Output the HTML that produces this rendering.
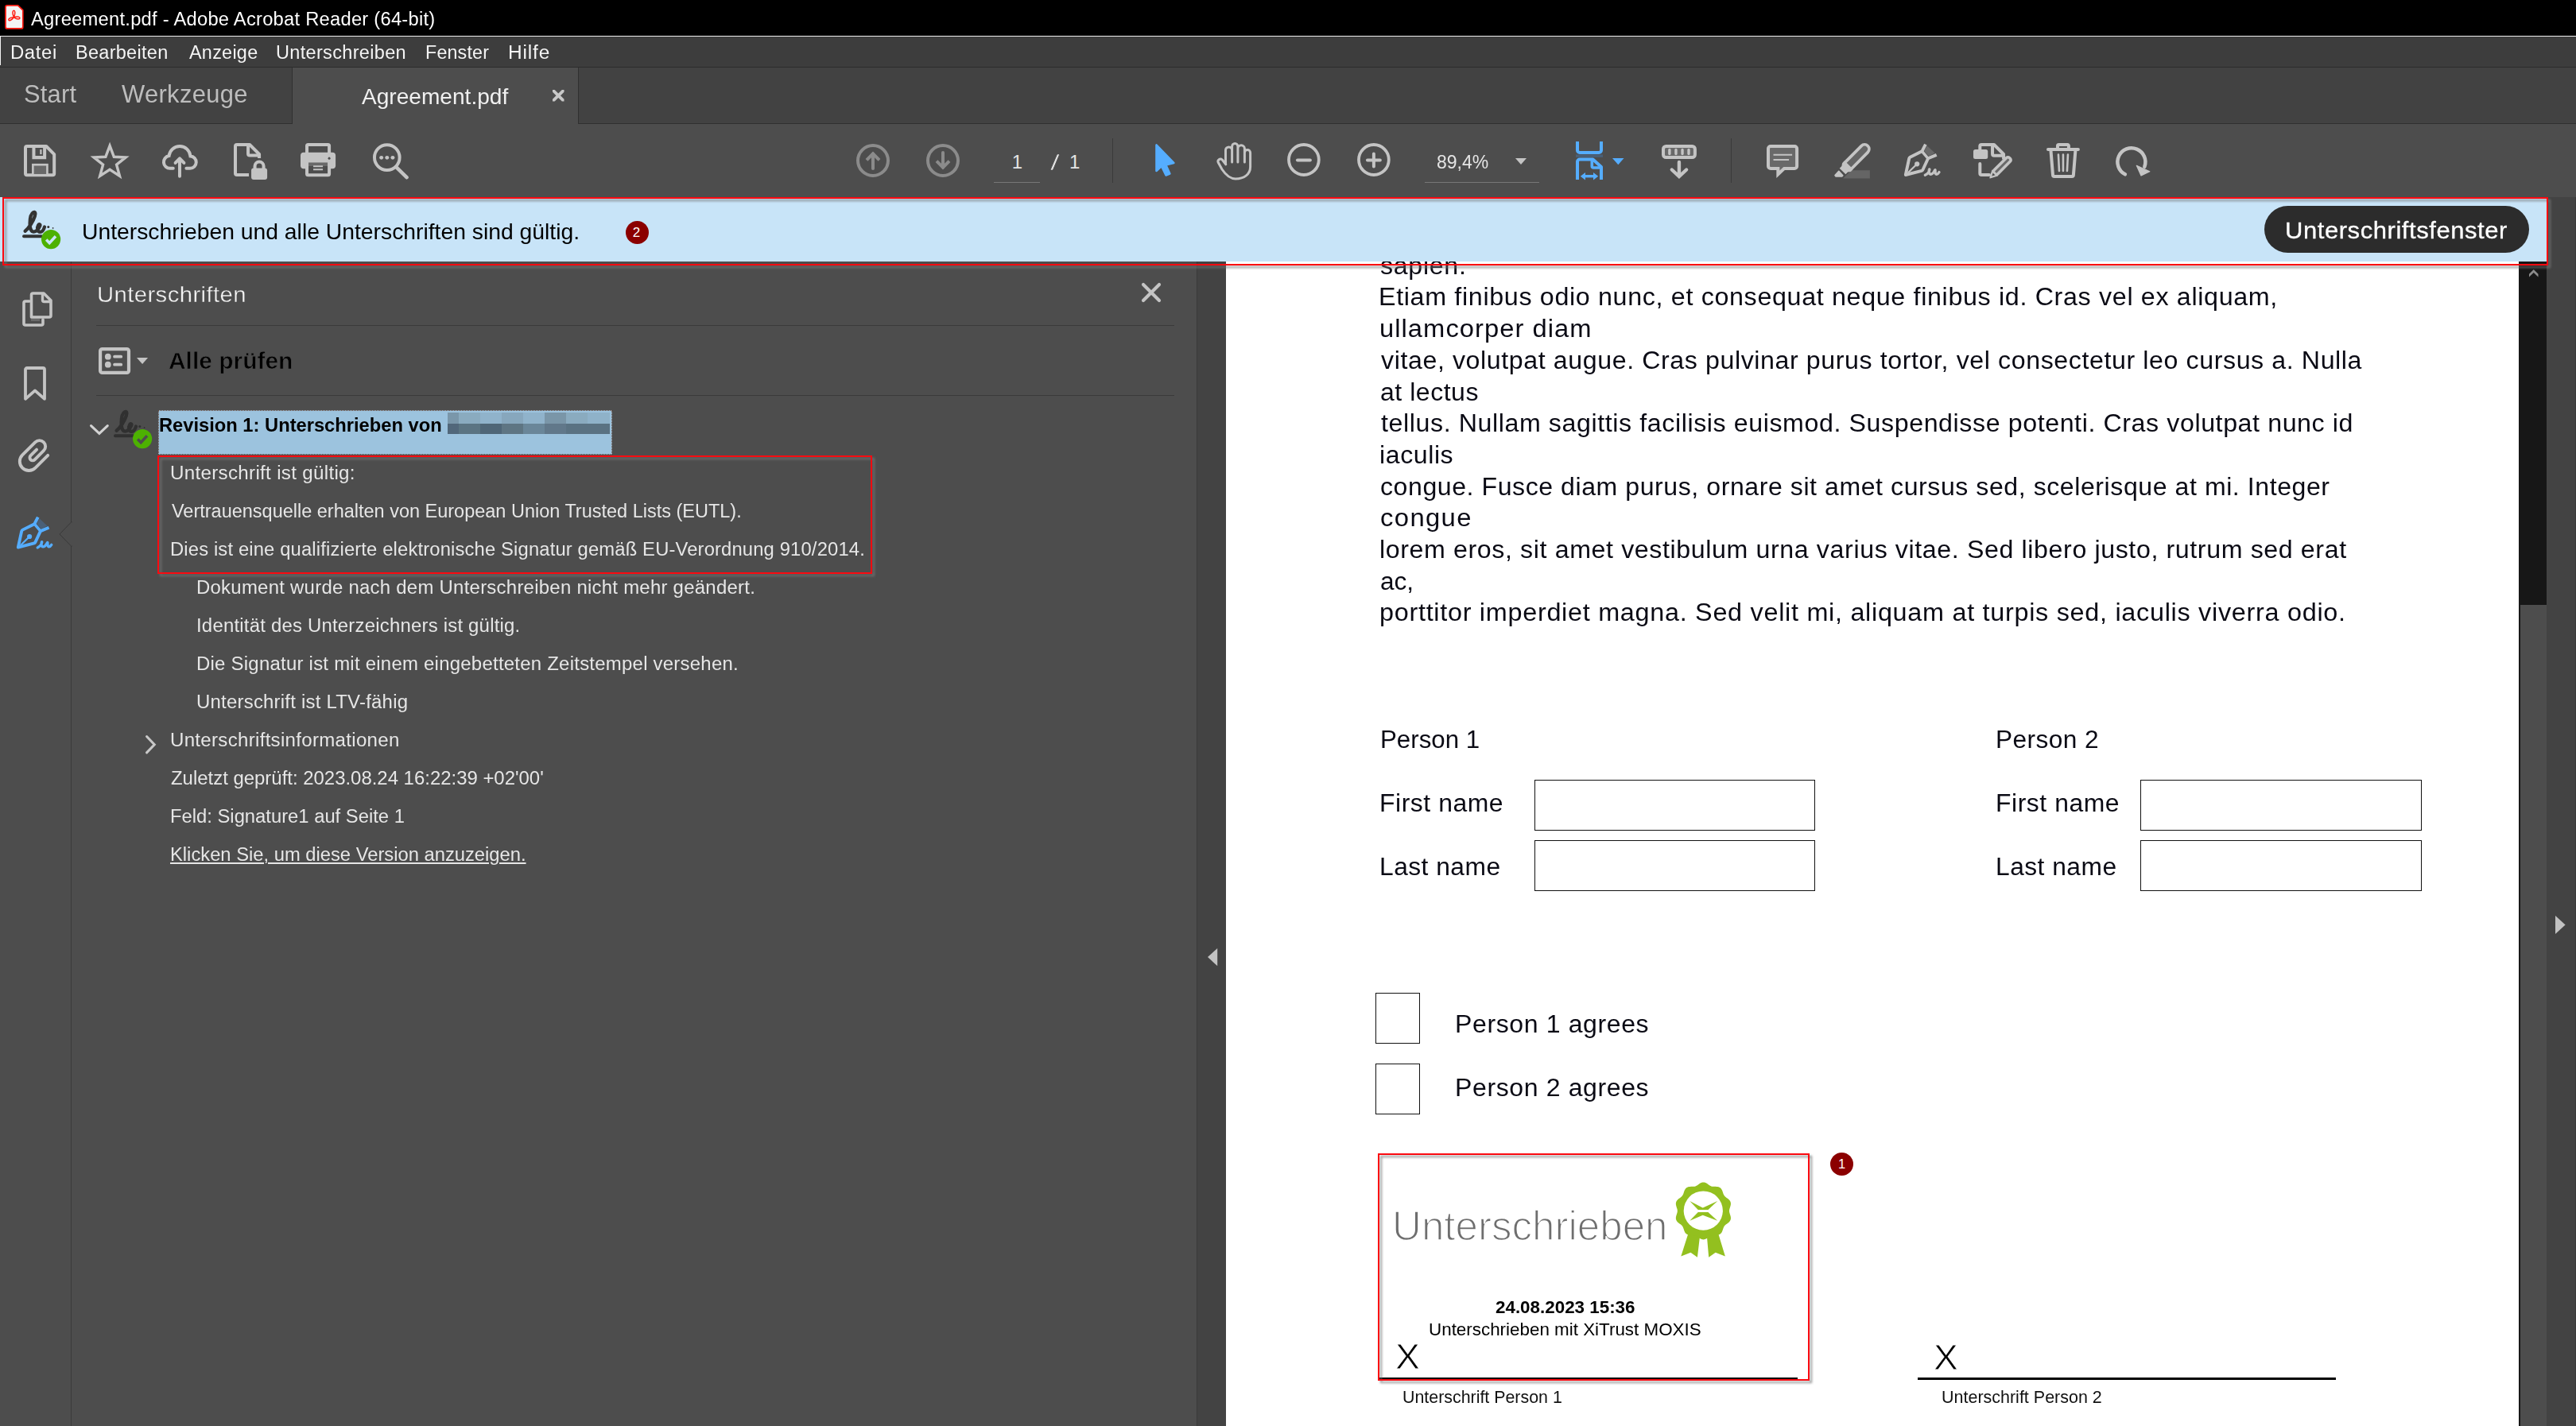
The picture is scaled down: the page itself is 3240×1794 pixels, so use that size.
<!DOCTYPE html>
<html lang="de">
<head>
<meta charset="utf-8">
<title>Agreement.pdf - Adobe Acrobat Reader (64-bit)</title>
<style>
*{box-sizing:border-box;margin:0;padding:0}
html,body{background:#4d4d4d;}
.app{position:relative;width:3240px;height:1794px;overflow:hidden;background:#4d4d4d;font-family:"Liberation Sans",sans-serif;}
.rg{position:absolute;overflow:hidden}
.t{position:absolute;white-space:nowrap;transform-origin:0 50%;display:block;font-weight:400;font-style:normal;text-decoration:none;cursor:default}
.b{position:absolute}
.ic{position:absolute;overflow:visible;fill:none;stroke:currentColor;color:#c4c4c4}

</style>
</head>
<body>
<div class="app">
<header class="rg titlebar" style="left:0px;top:0px;width:3240px;height:46.2px;background:#000;border-bottom:1.5px solid #f0f0f0;">
<svg class="ic" aria-hidden="true" style="left:6.1px;top:6.0px;width:23.7px;height:30.8px;" viewBox="0 0 23.7 30.8" preserveAspectRatio="none">
<path d="M3 0.900H16.600L22.800 6.800V27.900a2 2 0 0 1-2 2H3a2 2 0 0 1-2-2V2.900a2 2 0 0 1 2-2Z" fill="#f4f4f4" stroke="#ff1c12" stroke-width="1.700" stroke-linejoin="round"/>
<path d="M11.40 15.80C6.34 4.46 16.46 4.46 11.40 15.80M11.40 15.80C4.88 24.35 0.66 16.01 11.40 15.80M11.40 15.80C22.14 12.26 20.84 22.01 11.40 15.80" stroke="#ff1c12" stroke-width="1.500" stroke-linejoin="round"/>
</svg>
<h1 class="t" style="left:39.3px;top:12.90px;font-size:23.3px;line-height:23.3px;color:#fff;letter-spacing:0.245px;transform:scaleX(1.0185);">Agreement.pdf - Adobe Acrobat Reader (64-bit)</h1>
</header>
<nav class="rg menubar" role="menubar" style="left:0px;top:46.2px;width:3240px;height:38.8px;background:#3d3d3d;border-bottom:1.3px solid #2c2c2c;">
<div class="b" style="left:0.0px;top:-0.2px;width:1.3px;height:36.0px;background:#f2f2f2;"></div>
<span role="menuitem" class="t" style="left:12.9px;top:9.31px;font-size:23px;line-height:23px;color:#f4f4f4;letter-spacing:0.582px;transform:scaleX(1.0396);">Datei</span>
<span role="menuitem" class="t" style="left:95.4px;top:9.31px;font-size:23px;line-height:23px;color:#f4f4f4;letter-spacing:0.293px;transform:scaleX(1.0204);">Bearbeiten</span>
<span role="menuitem" class="t" style="left:237.6px;top:9.31px;font-size:23px;line-height:23px;color:#f4f4f4;letter-spacing:0.271px;transform:scaleX(1.0165);">Anzeige</span>
<span role="menuitem" class="t" style="left:347.4px;top:9.31px;font-size:23px;line-height:23px;color:#f4f4f4;letter-spacing:0.315px;transform:scaleX(1.0224);">Unterschreiben</span>
<span role="menuitem" class="t" style="left:535.0px;top:9.31px;font-size:23px;line-height:23px;color:#f4f4f4;letter-spacing:0.172px;transform:scaleX(1.0112);">Fenster</span>
<span role="menuitem" class="t" style="left:639.2px;top:9.31px;font-size:23px;line-height:23px;color:#f4f4f4;letter-spacing:0.788px;transform:scaleX(1.0638);">Hilfe</span>
</nav>
<div class="rg tabbar" role="tablist" style="left:0px;top:85px;width:3240px;height:71px;background:#424242;border-bottom:1.3px solid #303030;overflow:visible;">
<span role="tab" class="t" style="left:29.9px;top:17.81px;font-size:30.5px;line-height:30.5px;color:#bdbdbd;letter-spacing:0.217px;transform:scaleX(1.0116);">Start</span>
<span role="tab" class="t" style="left:152.6px;top:17.81px;font-size:30.5px;line-height:30.5px;color:#bdbdbd;letter-spacing:0.319px;transform:scaleX(1.0139);">Werkzeuge</span>
<div class="b" style="left:367.0px;top:0.0px;width:361.0px;height:71.5px;background:#4d4d4d;border-left:1.3px solid #303030;border-right:1.3px solid #303030;"></div>
<span role="tab" aria-selected="true" class="t" style="left:455.4px;top:22.91px;font-size:28px;line-height:28px;color:#f0f0f0;transform:scaleX(1.0033);">Agreement.pdf</span>
<svg class="ic" role="img" aria-label="Tab schließen" style="left:694.7px;top:27.8px;width:14.5px;height:14.4px;color:#c8c8c8;" viewBox="0 0 14.5 14.4" preserveAspectRatio="none"><path d="M0 0H2.700L14.500 11.700V14.400H11.800L0 2.700Z" fill="currentColor" stroke="none"/><path d="M14.500 0H11.800L0 11.700V14.400H2.700L14.500 2.700Z" fill="currentColor" stroke="none"/></svg>
</div>
<div class="rg toolbar" role="toolbar" style="left:0px;top:156px;width:3240px;height:92px;background:#4d4d4d;">
<svg class="ic" role="img" aria-label="Speichern" style="left:29.8px;top:26.0px;width:40.2px;height:40.3px;color:#c4c4c4;" viewBox="0 0 40 40" preserveAspectRatio="none">
<path d="M4 2H28L38 12V36a2 2 0 0 1-2 2H4a2 2 0 0 1-2-2V4a2 2 0 0 1 2-2Z" stroke-width="4" stroke-linejoin="round"/>
<path d="M12.4 2V16H26V2" stroke-width="4"/>
<rect x="20.2" y="6" width="2.2" height="6" fill="currentColor" stroke="none"/>
<rect x="11.3" y="25" width="18" height="13" fill="#696969" stroke-width="2.6"/>
</svg>
<svg class="ic" role="img" aria-label="Favorit" style="left:113.9px;top:22.9px;width:48.2px;height:46.1px;color:#c4c4c4;" viewBox="0 0 48 46" preserveAspectRatio="none"><polygon points="24.00,4.40 29.23,18.20 43.97,18.91 32.46,28.15 36.34,42.39 24.00,34.30 11.66,42.39 15.54,28.15 4.03,18.91 18.77,18.20" stroke-width="3.4" stroke-linejoin="miter"/></svg>
<svg class="ic" role="img" aria-label="Hochladen" style="left:203.9px;top:25.9px;width:44.4px;height:42.1px;color:#c4c4c4;" viewBox="0 0 44.4 42.1" preserveAspectRatio="none">
<path d="M13.800 29.800H9.900A7.900 7.900 0 0 1 8.570 14.100A13.500 13.500 0 0 1 35.450 14.410A7.700 7.700 0 0 1 35.100 29.800H30.400" stroke-width="4" stroke-linecap="round"/>
<path d="M22 39.800V17.800M16.600 23L22 17.300L27.400 23" stroke-width="4" stroke-linecap="round" stroke-linejoin="round"/>
</svg>
<svg class="ic" role="img" aria-label="Schützen" style="left:293.9px;top:24.0px;width:42.1px;height:46.0px;color:#c4c4c4;" viewBox="0 0 42 46" preserveAspectRatio="none">
<path d="M19 40H4a2 2 0 0 1-2-2V4a2 2 0 0 1 2-2H20L32 14V19" stroke-width="4" stroke-linejoin="round"/>
<path d="M18 2V13.5a2 2 0 0 0 2 2H32" stroke-width="4"/>
<rect x="22" y="31.5" width="20" height="14.5" rx="3" fill="currentColor" stroke="none"/>
<path d="M26.5 33V29a5.5 5.5 0 0 1 11 0V33" stroke-width="4"/>
</svg>
<svg class="ic" role="img" aria-label="Drucken" style="left:377.9px;top:24.0px;width:44.1px;height:42.3px;color:#c4c4c4;" viewBox="0 0 44 42" preserveAspectRatio="none">
<rect x="8" y="2" width="28" height="12" rx="1.5" stroke-width="4"/>
<rect x="0" y="11.7" width="44" height="20.3" rx="4" fill="currentColor" stroke="none"/>
<rect x="8" y="26" width="28" height="14" rx="1.5" fill="#4d4d4d" stroke-width="4"/>
<rect x="10" y="24.3" width="24" height="3.6" fill="#696969" stroke="none"/>
<path d="M16 29H28M16 33H28" stroke-width="2"/>
<circle cx="36" cy="19" r="1.5" fill="#4d4d4d" stroke="none"/>
</svg>
<svg class="ic" role="img" aria-label="Suchen" style="left:468.5px;top:24.0px;width:44.5px;height:45.7px;color:#c4c4c4;" viewBox="0 0 45 46" preserveAspectRatio="none">
<circle cx="18" cy="18.2" r="16" stroke-width="4"/>
<path d="M29.6 30.4L43 43.5" stroke-width="4.6" stroke-linecap="round"/>
<circle cx="10.8" cy="18.5" r="2.5" fill="currentColor" stroke="none"/>
<circle cx="18" cy="18.5" r="2.5" fill="currentColor" stroke="none"/>
<circle cx="25.2" cy="18.5" r="2.5" fill="currentColor" stroke="none"/>
</svg>
<svg class="ic" role="img" aria-label="Vorherige Seite" style="left:1077.1px;top:25.0px;width:42.0px;height:42.0px;color:#8b8b8b;" viewBox="0 0 42 42" preserveAspectRatio="none">
<circle cx="21" cy="21" r="19" stroke-width="4"/>
<path d="M21 31V12.500" stroke-width="4" stroke-linecap="round"/>
<path d="M13 20.300L21 12.300L29 20.300" stroke-width="4" stroke-linecap="butt" stroke-linejoin="miter"/>
</svg>
<svg class="ic" role="img" aria-label="Nächste Seite" style="left:1165.2px;top:25.0px;width:42.0px;height:42.0px;color:#8b8b8b;" viewBox="0 0 42 42" preserveAspectRatio="none">
<circle cx="21" cy="21" r="19" stroke-width="4"/>
<path d="M21 11V29.500" stroke-width="4" stroke-linecap="round"/>
<path d="M13 21.700L21 29.700L29 21.700" stroke-width="4" stroke-linecap="butt" stroke-linejoin="miter"/>
</svg>
<span class="t" style="left:1272.8px;top:36.41px;font-size:24px;line-height:24px;color:#e4e4e4;">1</span>
<div class="b" style="left:1250.0px;top:73.0px;width:58.0px;height:1.0px;background:#777;"></div>
<span class="t" style="left:1321.0px;top:35.52px;font-size:27px;line-height:27px;color:#e4e4e4;-webkit-text-stroke:0.6px #4d4d4d;transform:scaleX(1.5714);">/</span>
<span class="t" style="left:1345.0px;top:36.41px;font-size:24px;line-height:24px;color:#e4e4e4;">1</span>
<div class="b" style="left:1399.0px;top:18.0px;width:1.0px;height:56.0px;background:#3a3a3a;"></div>
<svg class="ic" role="img" aria-label="Auswahlwerkzeug" style="left:1453.4px;top:24.5px;width:24.8px;height:41.0px;color:#55adff;" viewBox="0 0 25 41" preserveAspectRatio="none">
<path d="M1.5 1.5V34L8 28L13.6 39.5L18.5 37.5L13.5 26.5L23.5 24Z" fill="currentColor" stroke-width="2.6" stroke-linejoin="round"/>
</svg>
<svg class="ic" role="img" aria-label="Handwerkzeug" style="left:1529.7px;top:22.8px;width:44.1px;height:47.4px;color:#c4c4c4;" viewBox="0 0 44.1 47.4" preserveAspectRatio="none">
<path d="M11.5 27.5V10a4.05 4.05 0 0 1 8.1 0V25M19.6 10V5.2a3.65 3.65 0 0 1 7.3 0V25M26.9 8a4.25 4.25 0 0 1 8.5 0V25M35.4 13.2a3.6 3.6 0 0 1 7.2 0V31C42.6 40 35 45.9 24 45.9C16 45.9 11 40 7 34L2.3 25.5c-1.5-3 2.2-6 5-3.500L11.800 27.800" stroke-width="3" stroke-linecap="round" stroke-linejoin="round"/>
</svg>
<svg class="ic" role="img" aria-label="Verkleinern" style="left:1619.2px;top:24.0px;width:41.8px;height:42.0px;color:#c4c4c4;" viewBox="0 0 42 42" preserveAspectRatio="none">
<circle cx="21" cy="21" r="19" stroke-width="3.8"/>
<path d="M13 21.5H29" stroke-width="4" stroke-linecap="round"/>
</svg>
<svg class="ic" role="img" aria-label="Vergrößern" style="left:1706.5px;top:24.0px;width:41.8px;height:42.0px;color:#c4c4c4;" viewBox="0 0 42 42" preserveAspectRatio="none">
<circle cx="21" cy="21" r="19" stroke-width="3.8"/>
<path d="M13 21.5H29M21 13.5V29.5" stroke-width="4" stroke-linecap="round"/>
</svg>
<span class="t" style="left:1807.3px;top:36.41px;font-size:24px;line-height:24px;color:#e4e4e4;transform:scaleX(0.9591);">89,4%</span>
<svg class="ic" aria-hidden="true" style="left:1906.0px;top:43.0px;width:14.0px;height:8.0px;color:#c4c4c4;" viewBox="0 0 14 8" preserveAspectRatio="none"><path d="M0 0H14L7 8Z" fill="currentColor" stroke="none"/></svg>
<div class="b" style="left:1792.0px;top:73.0px;width:144.0px;height:1.0px;background:#777;"></div>
<svg class="ic" role="img" aria-label="Seitenbreite" style="left:1982.0px;top:21.9px;width:34.0px;height:48.1px;color:#55adff;" viewBox="0 0 34 48" preserveAspectRatio="none">
<path d="M2 0V11a3 3 0 0 0 3 3H29a3 3 0 0 0 3-3V0" stroke-width="4"/>
<rect x="0" y="16.400" width="34" height="3.500" fill="#4a6078" stroke="none"/>
<path d="M2 48V25.500a3 3 0 0 1 3-3H21.500L32 32V48" stroke-width="4" stroke-linejoin="round"/>
<path d="M20.300 23V31a2 2 0 0 0 2 2H32" stroke-width="3.600"/>
<path d="M9 43.600H25" stroke-width="3.400"/>
<path d="M5.800 43.600L12 38.800V48.400ZM28.200 43.600L22 38.800V48.400Z" fill="currentColor" stroke="none"/>
</svg>
<svg class="ic" aria-hidden="true" style="left:2027.8px;top:43.0px;width:14.5px;height:8.3px;color:#55adff;" viewBox="0 0 14 8" preserveAspectRatio="none"><path d="M0 0H14L7 8Z" fill="currentColor" stroke="none"/></svg>
<svg class="ic" role="img" aria-label="Bildlaufmodus" style="left:2089.9px;top:26.0px;width:43.9px;height:42.0px;color:#c4c4c4;" viewBox="0 0 44 42" preserveAspectRatio="none">
<rect x="2" y="2" width="40" height="14" rx="3.500" fill="#696969" stroke-width="4"/>
<path d="M9.900 6.500V11.500M18 6.500V11.500M26.100 6.500V11.500M34.100 6.500V11.500" stroke-width="3.400" stroke-linecap="round"/>
<path d="M22 22V39M12.800 31.500L22 40L31.200 31.500" stroke-width="4.400" stroke-linecap="round" stroke-linejoin="miter"/>
</svg>
<div class="b" style="left:2177.0px;top:18.0px;width:1.0px;height:56.0px;background:#3a3a3a;"></div>
<svg class="ic" role="img" aria-label="Kommentar" style="left:2221.9px;top:25.9px;width:40.1px;height:42.1px;color:#c4c4c4;" viewBox="0 0 40 42" preserveAspectRatio="none">
<path d="M5 2H35a3 3 0 0 1 3 3V27a3 3 0 0 1-3 3H22L14.3 37.200V30H5a3 3 0 0 1-3-3V5a3 3 0 0 1 3-3Z" fill="#696969" stroke-width="4" stroke-linejoin="miter"/>
<path d="M8.500 12.800H32M8.500 19H28" stroke-width="2"/>
</svg>
<svg class="ic" role="img" aria-label="Hervorheben" style="left:2307.1px;top:23.7px;width:45.6px;height:44.4px;color:#c4c4c4;" viewBox="0 0 45.6 44.4" preserveAspectRatio="none">
<path d="M11.200 44.400L21.500 34.300H44.900V44.400Z" fill="#656565" stroke="none"/>
<g transform="translate(38.2 7.6) rotate(44.7)">
<path d="M-5.700 30V0a5.700 5.700 0 0 1 11.400 0V30Z" fill="#656565" stroke-width="3.700"/>
<path d="M-7.500 28.500H7.500V32.500L5.400 35.500V39.300H-5.400V35.500L-7.500 32.500Z" fill="currentColor" stroke="none"/>
</g>
<path d="M5.800 35.300L10.800 40.700L9.900 41.900H1.900L1 40.500Z" fill="currentColor" stroke="currentColor" stroke-width="1.600" stroke-linejoin="round"/>
</svg>
<svg class="ic" role="img" aria-label="Unterschreiben" style="left:2394.8px;top:23.9px;width:45.6px;height:43.0px;color:#c4c4c4;" viewBox="0 0 45.6 43" preserveAspectRatio="none">
<path d="M29 3.600L38.600 12.600L31 16.600L25.100 9.900Z" fill="#696969" stroke="none"/>
<path d="M26.900 1.600L22.400 10.300L7.500 17.800a2.500 2.500 0 0 0-1.300 1.700L1.800 40L22 34.800a2.500 2.500 0 0 0 1.500-1.300L30.100 19.300L40.700 14.900" stroke-width="3.900" stroke-linejoin="round" stroke-linecap="butt"/>
<path d="M22.400 10.300L30.100 19.300" stroke-width="3.600"/>
<path d="M4.900 37.300L16.200 26.300" stroke-width="2.300"/>
<circle cx="16.200" cy="26.300" r="3.100" fill="currentColor" stroke="none"/>
<path d="M26.300 40.300C29 39 31.500 36 31.900 33.400C32 32.600 31.200 33 31.200 35.500C31.200 40.500 35 40.300 37.500 36C38.500 34 39.200 33 39.100 34.500C38.800 40.500 41.500 40.500 44 36.600" stroke-width="3.300" stroke-linecap="round" stroke-linejoin="round"/>
</svg>
<svg class="ic" role="img" aria-label="Bearbeiten" style="left:2481.9px;top:24.0px;width:48.1px;height:46.0px;color:#c4c4c4;" viewBox="0 0 48 46" preserveAspectRatio="none">
<path d="M8.300 9V4a2 2 0 0 1 2-2H26L38 14V20.500" stroke-width="4" stroke-linejoin="round"/>
<path d="M24 2V13.800a2 2 0 0 0 2 2H38" stroke-width="4"/>
<rect x="0" y="8" width="18.200" height="12" rx="2.500" fill="currentColor" stroke="none"/>
<path d="M8.300 26V38a2 2 0 0 0 2 2H20" stroke-width="4" stroke-linecap="round"/>
<g transform="rotate(45 34 33)">
<rect x="29.100" y="14.800" width="6.600" height="27" rx="2.500" fill="#696969" stroke-width="3.600"/>
<path d="M27.600 41H37.200L32.400 50Z" fill="currentColor" stroke="currentColor" stroke-width="1.200" stroke-linejoin="round"/>
<path d="M30.400 42.800H34.400L32.400 46.500Z" fill="#4d4d4d" stroke="none"/>
</g>
</svg>
<svg class="ic" role="img" aria-label="Löschen" style="left:2574.0px;top:24.0px;width:41.9px;height:44.0px;color:#c4c4c4;" viewBox="0 0 42 44" preserveAspectRatio="none">
<path d="M2 8H40" stroke-width="4" stroke-linecap="round"/>
<path d="M14 6V3.500a1.500 1.500 0 0 1 1.500-1.500H26.500a1.500 1.500 0 0 1 1.500 1.500V6" stroke-width="4"/>
<path d="M5.500 9.500L8 40a2 2 0 0 0 2 2H32a2 2 0 0 0 2-2L36.500 9.500" stroke-width="4" stroke-linejoin="round"/>
<path d="M15 14.500L16 35M21 14.500V35M27 14.500L26 35" stroke-width="2.600" stroke-linecap="round"/>
</svg>
<svg class="ic" role="img" aria-label="Drehen" style="left:2660.6px;top:27.5px;width:44.0px;height:38.0px;color:#c4c4c4;" viewBox="0 0 44 38" preserveAspectRatio="none">
<path d="M11.900 35.300A17.500 17.500 0 1 1 36.300 25.800" stroke-width="4.500" stroke-linecap="round"/>
<path d="M26.300 24.300L42.800 31.800L32 36.900Z" fill="currentColor" stroke="currentColor" stroke-width="1.200" stroke-linejoin="round"/>
</svg>
</div>
<aside class="rg leftpanel" aria-label="Unterschriften" style="left:0px;top:329px;width:1505px;height:1465px;background:#4d4d4d;">
<div class="b" style="left:89.0px;top:0.0px;width:1.0px;height:1465.0px;background:#3a3a3a;"></div>
<svg class="ic" role="img" aria-label="Seitenminiaturen" style="left:28.0px;top:37.6px;width:38.0px;height:44.0px;color:#c4c4c4;" viewBox="0 0 38 44" preserveAspectRatio="none">
<path d="M11.500 32V4a2 2 0 0 1 2-2H27L36 11V30a2 2 0 0 1-2 2Z" stroke-width="3.600" stroke-linejoin="round"/>
<path d="M25.500 2V10.500a2 2 0 0 0 2 2H36" stroke-width="3.400"/>
<path d="M9 12H4a2 2 0 0 0-2 2V40a2 2 0 0 0 2 2H24a2 2 0 0 0 2-2V35" stroke-width="3.600" stroke-linecap="round"/>
<rect x="11" y="34" width="11" height="3" fill="#696969" stroke="none"/>
</svg>
<svg class="ic" role="img" aria-label="Lesezeichen" style="left:30.0px;top:132.0px;width:28.0px;height:43.8px;color:#c4c4c4;" viewBox="0 0 28 44" preserveAspectRatio="none">
<path d="M2 41V4a2 2 0 0 1 2-2H24a2 2 0 0 1 2 2V41L14 30.500Z" stroke-width="3.800" stroke-linejoin="round"/>
</svg>
<svg class="ic" role="img" aria-label="Anlagen" style="left:24.0px;top:224.0px;width:38.6px;height:40.0px;color:#c4c4c4;" viewBox="0 0 38.6 40" preserveAspectRatio="none">
<g transform="translate(18.97 20.87) rotate(-45)">
<path d="M12.900 11.500H-9.400A11.500 11.500 0 0 1 -9.400 -11.500H13.350A7.550 7.550 0 0 1 13.350 3.600H-2.700A3.600 3.600 0 0 1 -2.700 -3.600H8" stroke-width="3.900" stroke-linecap="round" stroke-linejoin="round"/>
</g>
</svg>
<svg class="ic" role="img" aria-label="Unterschriften" style="left:20.6px;top:319.8px;width:45.4px;height:42.6px;color:#55adff;" viewBox="0 0 45.6 43" preserveAspectRatio="none">
<path d="M29 3.600L38.600 12.600L31 16.600L25.100 9.900Z" fill="#4a6078" stroke="none"/>
<path d="M26.900 1.600L22.400 10.300L7.500 17.800a2.500 2.500 0 0 0-1.300 1.700L1.800 40L22 34.800a2.500 2.500 0 0 0 1.500-1.300L30.100 19.300L40.700 14.900" stroke-width="3.900" stroke-linejoin="round" stroke-linecap="butt"/>
<path d="M22.400 10.300L30.100 19.300" stroke-width="3.600"/>
<path d="M4.900 37.300L16.200 26.300" stroke-width="2.300"/>
<circle cx="16.200" cy="26.300" r="3.100" fill="currentColor" stroke="none"/>
<path d="M26.300 40.300C29 39 31.500 36 31.900 33.400C32 32.600 31.200 33 31.200 35.500C31.200 40.500 35 40.300 37.500 36C38.500 34 39.200 33 39.100 34.500C38.800 40.500 41.500 40.500 44 36.600" stroke-width="3.300" stroke-linecap="round" stroke-linejoin="round"/>
</svg>
<svg class="ic" style="left:73px;top:326px;width:18px;height:34px" viewBox="0 0 18 34"><path d="M17 1.500L2 17L17 32.500V1.500" fill="#4d4d4d" stroke="#3a3a3a" stroke-width="1"/><path d="M17 2.500V31.500" stroke="#4d4d4d" stroke-width="2"/></svg>
<h2 class="t" style="left:121.5px;top:27.02px;font-size:28.5px;line-height:28.5px;color:#f4f4f4;-webkit-text-stroke:0.35px #4d4d4d;letter-spacing:0.412px;transform:scaleX(1.0259);">Unterschriften</h2>
<svg class="ic" role="img" aria-label="Schließen" style="left:1436.0px;top:27.0px;width:24.0px;height:24.0px;color:#c4c4c4;" viewBox="0 0 24 24" preserveAspectRatio="none"><path d="M2 2L22 22M22 2L2 22" stroke-width="4.200" stroke-linecap="round"/></svg>
<div class="b" style="left:121.0px;top:80.0px;width:1356.0px;height:1.0px;background:#3a3a3a;"></div>
<svg class="ic" aria-hidden="true" style="left:123.9px;top:108.0px;width:40.1px;height:34.0px;color:#c4c4c4;" viewBox="0 0 40.1 34" preserveAspectRatio="none">
<rect x="2.100" y="2.100" width="35.900" height="29.800" rx="2.500" stroke-width="4.200"/>
<circle cx="11.800" cy="11.700" r="3.900" fill="currentColor" stroke="none"/>
<circle cx="11.800" cy="21.700" r="3.900" fill="currentColor" stroke="none"/>
<path d="M20 11.700H28.300M20 21.700H28.300" stroke-width="3.700" stroke-linecap="round"/>
</svg>
<svg class="ic" aria-hidden="true" style="left:172.0px;top:121.0px;width:14.1px;height:7.9px;color:#c4c4c4;" viewBox="0 0 14 8" preserveAspectRatio="none"><path d="M0 0H14L7 8Z" fill="currentColor" stroke="none"/></svg>
<span class="t" style="left:212.3px;top:109.91px;font-size:29.5px;line-height:29.5px;color:#000;font-weight:700;-webkit-text-stroke:0.75px #4d4d4d;transform:scaleX(1.0146);">Alle prüfen</span>
<div class="b" style="left:121.0px;top:168.0px;width:1356.0px;height:1.0px;background:#3a3a3a;"></div>
<svg class="ic" aria-hidden="true" style="left:112.6px;top:204.7px;width:23.8px;height:13.4px;color:#d2d2d2;" viewBox="0 0 23 13" preserveAspectRatio="none"><path d="M1.500 1.500L11.500 11L21.500 1.500" stroke-width="3" stroke-linecap="round" stroke-linejoin="miter"/></svg>
<svg class="ic" aria-hidden="true" style="left:142.9px;top:186.9px;width:48.0px;height:48.0px;" viewBox="0 0 48 48" preserveAspectRatio="none">
<path d="M3.600 25.800C8 22.500 13.500 14 15.800 7C17.300 2.800 16 1.200 14 2.200C11 3.800 9.600 10 9.600 16C9.600 23 11.500 26.600 14.600 26.600C17.500 26.600 21 22.500 22.300 19C23 17 21.200 16.400 20 18.500C18.300 21.500 19 26.900 22.400 26.900C25 26.900 27 24 28 20.500" stroke="#303030" stroke-width="4.300" stroke-linecap="round" stroke-linejoin="round"/>
<circle cx="32.800" cy="20.400" r="1.500" fill="#303030" stroke="none"/>
<circle cx="38.600" cy="21.900" r="0.900" fill="#303030" stroke="none"/>
<path d="M2 32.200H24" stroke="#303030" stroke-width="3.900" stroke-linecap="round"/>
<circle cx="36.100" cy="36.100" r="12.100" fill="#4db102" stroke="none"/>
<path d="M30.200 36.600L34.200 40.700L42 32.300" stroke="#4d4d4d" stroke-width="3.600" stroke-linejoin="miter"/>
</svg>
<div class="b" style="left:199.0px;top:187.2px;width:571.0px;height:55.8px;background:#9cc3de;outline:1px dotted #6b4a3a;outline-offset:-1px;"></div>
<span class="t" style="left:199.8px;top:195.00px;font-size:23.5px;line-height:23.5px;color:#000;font-weight:700;transform:scaleX(1.0086);">Revision 1: Unterschrieben von</span>
<div class="b" style="left:563.1px;top:190.1px;width:203.5px;height:26.7px;"><i style="position:absolute;left:0.0px;top:0;width:14.0px;height:13.6px;background:#7a97aa"></i><i style="position:absolute;left:0.0px;top:13.6px;width:14.0px;height:13.1px;background:#51677a"></i><i style="position:absolute;left:13.8px;top:0;width:27.2px;height:13.6px;background:#8aabbf"></i><i style="position:absolute;left:13.8px;top:13.6px;width:27.2px;height:13.1px;background:#5b7482"></i><i style="position:absolute;left:40.8px;top:0;width:27.3px;height:13.6px;background:#90b3cb"></i><i style="position:absolute;left:40.8px;top:13.6px;width:27.3px;height:13.1px;background:#4f6677"></i><i style="position:absolute;left:67.9px;top:0;width:27.1px;height:13.6px;background:#87a7bd"></i><i style="position:absolute;left:67.9px;top:13.6px;width:27.1px;height:13.1px;background:#5e7583"></i><i style="position:absolute;left:94.8px;top:0;width:27.2px;height:13.6px;background:#90b3cb"></i><i style="position:absolute;left:94.8px;top:13.6px;width:27.2px;height:13.1px;background:#6a8699"></i><i style="position:absolute;left:121.8px;top:0;width:27.1px;height:13.6px;background:#7a96a8"></i><i style="position:absolute;left:121.8px;top:13.6px;width:27.1px;height:13.1px;background:#61788a"></i><i style="position:absolute;left:148.7px;top:0;width:27.2px;height:13.6px;background:#8aabbf"></i><i style="position:absolute;left:148.7px;top:13.6px;width:27.2px;height:13.1px;background:#5a7282"></i><i style="position:absolute;left:175.7px;top:0;width:28.0px;height:13.6px;background:#8fb2c9"></i><i style="position:absolute;left:175.7px;top:13.6px;width:28.0px;height:13.1px;background:#5a7282"></i></div>
<span role="treeitem" class="t" style="left:214.2px;top:255.00px;font-size:23.5px;line-height:23.5px;color:#e6e6e6;letter-spacing:0.303px;transform:scaleX(1.0271);">Unterschrift ist gültig:</span>
<span role="treeitem" class="t" style="left:216.3px;top:303.00px;font-size:23.5px;line-height:23.5px;color:#e6e6e6;transform:scaleX(0.9993);">Vertrauensquelle erhalten von European Union Trusted Lists (EUTL).</span>
<span role="treeitem" class="t" style="left:214.3px;top:351.00px;font-size:23.5px;line-height:23.5px;color:#e6e6e6;letter-spacing:0.151px;transform:scaleX(1.0117);">Dies ist eine qualifizierte elektronische Signatur gemäß EU-Verordnung 910/2014.</span>
<span role="treeitem" class="t" style="left:246.6px;top:399.00px;font-size:23.5px;line-height:23.5px;color:#e6e6e6;letter-spacing:0.255px;transform:scaleX(1.0184);">Dokument wurde nach dem Unterschreiben nicht mehr geändert.</span>
<span role="treeitem" class="t" style="left:246.6px;top:447.00px;font-size:23.5px;line-height:23.5px;color:#e6e6e6;letter-spacing:0.212px;transform:scaleX(1.0177);">Identität des Unterzeichners ist gültig.</span>
<span role="treeitem" class="t" style="left:246.6px;top:495.00px;font-size:23.5px;line-height:23.5px;color:#e6e6e6;letter-spacing:0.241px;transform:scaleX(1.0188);">Die Signatur ist mit einem eingebetteten Zeitstempel versehen.</span>
<span role="treeitem" class="t" style="left:246.6px;top:543.00px;font-size:23.5px;line-height:23.5px;color:#e6e6e6;letter-spacing:0.225px;transform:scaleX(1.0186);">Unterschrift ist LTV-fähig</span>
<span role="treeitem" class="t" style="left:214.3px;top:591.00px;font-size:23.5px;line-height:23.5px;color:#e6e6e6;letter-spacing:0.301px;transform:scaleX(1.0232);">Unterschriftsinformationen</span>
<span role="treeitem" class="t" style="left:215.3px;top:639.00px;font-size:23.5px;line-height:23.5px;color:#e6e6e6;transform:scaleX(1.0181);">Zuletzt geprüft: 2023.08.24 16:22:39 +02'00'</span>
<span role="treeitem" class="t" style="left:214.3px;top:687.00px;font-size:23.5px;line-height:23.5px;color:#e6e6e6;transform:scaleX(1.0122);">Feld: Signature1 auf Seite 1</span>
<a class="t" style="left:214.3px;top:735.00px;font-size:23.5px;line-height:23.5px;color:#e6e6e6;text-decoration:underline;text-decoration-thickness:1.7px;text-underline-offset:2.4px;transform:scaleX(1.0107);">Klicken Sie, um diese Version anzuzeigen.</a>
<svg class="ic" aria-hidden="true" style="left:182.9px;top:596.0px;width:13.3px;height:23.4px;color:#c8c8c8;" viewBox="0 0 13 23" preserveAspectRatio="none"><path d="M1.500 1.500L11 11.500L1.500 21.500" stroke-width="3" stroke-linecap="round" stroke-linejoin="miter"/></svg>
</aside>
<div class="rg splitter" style="left:1505px;top:329px;width:37px;height:1465px;background:#434343;border-left:1px solid #3a3a3a;">
<svg class="ic" aria-hidden="true" style="left:12.8px;top:864.0px;width:12.2px;height:22.2px;color:#c2c2c2;" viewBox="0 0 13 23" preserveAspectRatio="none"><path d="M13 0V23L0 11.5Z" fill="currentColor" stroke="none"/></svg>
</div>
<main class="rg document" style="left:1542px;top:329px;width:1626px;height:1465px;background:#fff;">
<p class="t" style="left:194.0px;top:-10.42px;font-size:31px;line-height:31px;color:#0a0a14;letter-spacing:0.681px;transform:scaleX(1.0361);">sapien.</p>
<p class="t" style="left:191.9px;top:29.31px;font-size:31px;line-height:31px;color:#0a0a14;letter-spacing:0.642px;transform:scaleX(1.0396);">Etiam finibus odio nunc, et consequat neque finibus id. Cras vel ex aliquam,</p>
<p class="t" style="left:192.9px;top:69.01px;font-size:31px;line-height:31px;color:#0a0a14;letter-spacing:0.994px;transform:scaleX(1.0550);">ullamcorper diam</p>
<p class="t" style="left:195.0px;top:108.81px;font-size:31px;line-height:31px;color:#0a0a14;letter-spacing:0.579px;transform:scaleX(1.0366);">vitae, volutpat augue. Cras pulvinar purus tortor, vel consectetur leo cursus a. Nulla</p>
<p class="t" style="left:194.0px;top:148.51px;font-size:31px;line-height:31px;color:#0a0a14;letter-spacing:0.527px;transform:scaleX(1.0315);">at lectus</p>
<p class="t" style="left:195.0px;top:188.21px;font-size:31px;line-height:31px;color:#0a0a14;letter-spacing:0.581px;transform:scaleX(1.0367);">tellus. Nullam sagittis facilisis euismod. Suspendisse potenti. Cras volutpat nunc id</p>
<p class="t" style="left:192.9px;top:227.90px;font-size:31px;line-height:31px;color:#0a0a14;letter-spacing:0.567px;transform:scaleX(1.0347);">iaculis</p>
<p class="t" style="left:194.0px;top:267.71px;font-size:31px;line-height:31px;color:#0a0a14;letter-spacing:0.556px;transform:scaleX(1.0335);">congue. Fusce diam purus, ornare sit amet cursus sed, scelerisque at mi. Integer</p>
<p class="t" style="left:193.9px;top:307.40px;font-size:31px;line-height:31px;color:#0a0a14;letter-spacing:1.311px;transform:scaleX(1.0573);">congue</p>
<p class="t" style="left:192.9px;top:347.10px;font-size:31px;line-height:31px;color:#0a0a14;letter-spacing:0.592px;transform:scaleX(1.0372);">lorem eros, sit amet vestibulum urna varius vitae. Sed libero justo, rutrum sed erat</p>
<p class="t" style="left:194.0px;top:386.81px;font-size:31px;line-height:31px;color:#0a0a14;transform:scaleX(1.0184);">ac,</p>
<p class="t" style="left:192.9px;top:426.21px;font-size:31px;line-height:31px;color:#0a0a14;letter-spacing:0.681px;transform:scaleX(1.0444);">porttitor imperdiet magna. Sed velit mi, aliquam at turpis sed, iaculis viverra odio.</p>
<h3 class="t" style="left:193.5px;top:586.01px;font-size:31px;line-height:31px;color:#0a0a14;transform:scaleX(1.0083);">Person 1</h3>
<h3 class="t" style="left:967.6px;top:586.01px;font-size:31px;line-height:31px;color:#0a0a14;letter-spacing:0.416px;transform:scaleX(1.0203);">Person 2</h3>
<label class="t" style="left:193.4px;top:665.81px;font-size:31px;line-height:31px;color:#0a0a14;letter-spacing:0.535px;transform:scaleX(1.0285);">First name</label>
<label class="t" style="left:193.4px;top:745.60px;font-size:31px;line-height:31px;color:#0a0a14;letter-spacing:0.484px;transform:scaleX(1.0231);">Last name</label>
<label class="t" style="left:967.6px;top:665.81px;font-size:31px;line-height:31px;color:#0a0a14;letter-spacing:0.535px;transform:scaleX(1.0285);">First name</label>
<label class="t" style="left:967.6px;top:745.60px;font-size:31px;line-height:31px;color:#0a0a14;letter-spacing:0.484px;transform:scaleX(1.0231);">Last name</label>
<div class="b" role="textbox" style="left:388.0px;top:652.0px;width:353.0px;height:63.7px;border:1.3px solid #111;background:#fff;"></div>
<div class="b" role="textbox" style="left:388.0px;top:728.0px;width:353.0px;height:63.8px;border:1.3px solid #111;background:#fff;"></div>
<div class="b" role="textbox" style="left:1149.5px;top:652.0px;width:354.0px;height:63.7px;border:1.3px solid #111;background:#fff;"></div>
<div class="b" role="textbox" style="left:1149.5px;top:728.0px;width:354.0px;height:63.8px;border:1.3px solid #111;background:#fff;"></div>
<div class="b" role="checkbox" aria-checked="false" style="left:187.6px;top:920.0px;width:56.2px;height:64.4px;border:1.3px solid #111;background:#fff;"></div>
<div class="b" role="checkbox" aria-checked="false" style="left:187.6px;top:1009.0px;width:56.2px;height:64.4px;border:1.3px solid #111;background:#fff;"></div>
<label class="t" style="left:287.9px;top:944.01px;font-size:31px;line-height:31px;color:#0a0a14;letter-spacing:0.609px;transform:scaleX(1.0323);">Person 1 agrees</label>
<label class="t" style="left:287.9px;top:1023.71px;font-size:31px;line-height:31px;color:#0a0a14;letter-spacing:0.609px;transform:scaleX(1.0323);">Person 2 agrees</label>
<span class="t" style="left:209.1px;top:1187.01px;font-size:52px;line-height:52px;color:#6e6e6e;-webkit-text-stroke:1.6px #fff;transform:scaleX(0.9826);">Unterschrieben</span>
<svg class="ic" aria-hidden="true" style="left:565.7px;top:1158.2px;width:69.0px;height:96.0px;" viewBox="0 0 69 96" preserveAspectRatio="none">
<path d="M16 63L6.300 93.400L18.500 88.800L26.900 94.700L30.300 66Z" fill="#93c01f" stroke="none"/>
<path d="M52.600 63L61.900 93.400L49.700 88.800L41.200 94.700L38.700 66Z" fill="#93c01f" stroke="none"/>
<path d="M67.00 36.40L67.07 37.43L67.26 38.47L67.55 39.53L67.91 40.63L68.28 41.77L68.61 42.93L68.85 44.10L68.95 45.27L68.89 46.42L68.64 47.52L68.19 48.57L67.57 49.53L66.80 50.42L65.91 51.23L64.96 51.97L64.00 52.67L63.06 53.35L62.20 54.04L61.43 54.77L60.77 55.56L60.22 56.43L59.77 57.39L59.38 58.42L59.02 59.52L58.65 60.65L58.24 61.79L57.74 62.88L57.14 63.89L56.41 64.78L55.56 65.52L54.59 66.11L53.52 66.52L52.37 66.78L51.18 66.92L49.97 66.96L48.78 66.96L47.63 66.96L46.52 67.01L45.47 67.15L44.47 67.40L43.52 67.79L42.59 68.29L41.66 68.90L40.73 69.58L39.77 70.28L38.76 70.95L37.72 71.54L36.64 72.00L35.53 72.30L34.40 72.40L33.27 72.30L32.16 72.00L31.08 71.54L30.04 70.95L29.03 70.28L28.07 69.58L27.14 68.90L26.21 68.29L25.28 67.79L24.33 67.40L23.33 67.15L22.28 67.01L21.17 66.96L20.02 66.96L18.83 66.96L17.62 66.92L16.43 66.78L15.28 66.52L14.21 66.11L13.24 65.52L12.39 64.78L11.66 63.89L11.06 62.88L10.56 61.79L10.15 60.65L9.78 59.52L9.42 58.42L9.03 57.39L8.58 56.43L8.03 55.56L7.37 54.77L6.60 54.04L5.74 53.35L4.80 52.67L3.84 51.97L2.89 51.23L2.00 50.42L1.23 49.53L0.61 48.57L0.16 47.52L-0.09 46.42L-0.15 45.27L-0.05 44.10L0.19 42.93L0.52 41.77L0.89 40.63L1.25 39.53L1.54 38.47L1.73 37.43L1.80 36.40L1.73 35.37L1.54 34.33L1.25 33.27L0.89 32.17L0.52 31.03L0.19 29.87L-0.05 28.70L-0.15 27.53L-0.09 26.38L0.16 25.28L0.61 24.23L1.23 23.27L2.00 22.38L2.89 21.57L3.84 20.83L4.80 20.13L5.74 19.45L6.60 18.76L7.37 18.03L8.03 17.24L8.58 16.37L9.03 15.41L9.42 14.38L9.78 13.28L10.15 12.15L10.56 11.01L11.06 9.92L11.66 8.91L12.39 8.02L13.24 7.28L14.21 6.69L15.28 6.28L16.43 6.02L17.62 5.88L18.83 5.84L20.02 5.84L21.17 5.84L22.28 5.79L23.33 5.65L24.33 5.40L25.28 5.01L26.21 4.51L27.14 3.90L28.07 3.22L29.03 2.52L30.04 1.85L31.08 1.26L32.16 0.80L33.27 0.50L34.40 0.40L35.53 0.50L36.64 0.80L37.72 1.26L38.76 1.85L39.77 2.52L40.73 3.22L41.66 3.90L42.59 4.51L43.52 5.01L44.47 5.40L45.47 5.65L46.52 5.79L47.63 5.84L48.78 5.84L49.97 5.84L51.18 5.88L52.37 6.02L53.52 6.28L54.59 6.69L55.56 7.28L56.41 8.02L57.14 8.91L57.74 9.92L58.24 11.01L58.65 12.15L59.02 13.28L59.38 14.38L59.77 15.41L60.22 16.37L60.77 17.24L61.43 18.03L62.20 18.76L63.06 19.45L64.00 20.13L64.96 20.83L65.91 21.57L66.80 22.38L67.57 23.27L68.19 24.23L68.64 25.28L68.89 26.38L68.95 27.53L68.85 28.70L68.61 29.87L68.28 31.03L67.91 32.17L67.55 33.27L67.26 34.33L67.07 35.37Z" fill="#93c01f" stroke="none"/>
<circle cx="34.300" cy="36.100" r="24.600" fill="#fff" stroke="none"/>
<path d="M17.300 24L33.700 32.400L52.200 24L40.400 34.900H27.800Z" fill="#93c01f" stroke="none"/>
<path d="M17.300 48.800L27.800 37.900H40.400L52.200 48.800L33.700 41.700Z" fill="#93c01f" stroke="none"/>
</svg>
<span class="t" style="left:339.0px;top:1304.81px;font-size:22px;line-height:22px;color:#000;font-weight:700;transform:scaleX(1.0175);">24.08.2023 15:36</span>
<span class="t" style="left:255.0px;top:1332.50px;font-size:22px;line-height:22px;color:#000;transform:scaleX(1.0180);">Unterschrieben mit XiTrust MOXIS</span>
<span class="t" style="left:212.9px;top:1357.01px;font-size:43.5px;line-height:43.5px;color:#000;-webkit-text-stroke:0.8px #fff;transform:scaleX(1.0667);">X</span>
<div class="b" style="left:192.8px;top:1403.6px;width:526.2px;height:2.8px;background:#000;"></div>
<span class="t" style="left:222.1px;top:1418.02px;font-size:22.5px;line-height:22.5px;color:#111;transform:scaleX(0.9500);">Unterschrift Person 1</span>
<span class="t" style="left:889.9px;top:1358.01px;font-size:43.5px;line-height:43.5px;color:#000;-webkit-text-stroke:0.8px #fff;transform:scaleX(1.0630);">X</span>
<div class="b" style="left:870.0px;top:1404.0px;width:526.0px;height:2.8px;background:#000;"></div>
<span class="t" style="left:899.5px;top:1418.02px;font-size:22.5px;line-height:22.5px;color:#111;transform:scaleX(0.9548);">Unterschrift Person 2</span>
<div class="b" style="left:759.6px;top:1120.6px;width:29.4px;height:29.4px;background:#8b0000;border-radius:50%;"></div>
<span class="t" style="left:770.1px;top:1127.02px;font-size:16.5px;line-height:16.5px;color:#fff;">1</span>
</main>
<div class="rg scrollbar" style="left:3168px;top:329px;width:35px;height:1465px;background:#171717;">
<div class="b" style="left:2.0px;top:431.5px;width:32.5px;height:1040.0px;background:#4d4d4d;"></div>
<svg class="ic" aria-hidden="true" style="left:12.8px;top:9.8px;width:11.5px;height:9.5px;color:#8c8c8c;" viewBox="0 0 11.5 9.5" preserveAspectRatio="none"><path d="M0 9.500V5.700L5.750 0L11.500 5.700V9.500L5.750 3.900Z" fill="currentColor" stroke="none"/></svg>
</div>
<div class="rg rightstrip" style="left:3203px;top:248px;width:37px;height:1546px;background:#434343;border-right:1px solid #3a3a3a;">
<svg class="ic" aria-hidden="true" style="left:11.2px;top:904.0px;width:12.6px;height:23.0px;color:#c2c2c2;" viewBox="0 0 13 23" preserveAspectRatio="none"><path d="M0 0V23L13 11.5Z" fill="currentColor" stroke="none"/></svg>
</div>
<section class="rg banner" role="status" style="left:0px;top:248px;width:3203px;height:81px;background:#c8e4f8;overflow:visible;">
<svg class="ic" aria-hidden="true" style="left:28.0px;top:16.9px;width:48.0px;height:48.0px;" viewBox="0 0 48 48" preserveAspectRatio="none">
<path d="M3.600 25.800C8 22.500 13.500 14 15.800 7C17.300 2.800 16 1.200 14 2.200C11 3.800 9.600 10 9.600 16C9.600 23 11.500 26.600 14.600 26.600C17.500 26.600 21 22.500 22.300 19C23 17 21.200 16.400 20 18.500C18.300 21.500 19 26.900 22.400 26.900C25 26.900 27 24 28 20.500" stroke="#333" stroke-width="4.300" stroke-linecap="round" stroke-linejoin="round"/>
<circle cx="32.800" cy="20.400" r="1.500" fill="#333" stroke="none"/>
<circle cx="38.600" cy="21.900" r="0.900" fill="#333" stroke="none"/>
<path d="M2 32.200H24" stroke="#333" stroke-width="3.900" stroke-linecap="round"/>
<circle cx="36.100" cy="36.100" r="12.100" fill="#4db102" stroke="none"/>
<path d="M30.200 36.600L34.200 40.700L42 32.300" stroke="#c8e4f8" stroke-width="3.600" stroke-linejoin="miter"/>
</svg>
<span class="t" style="left:103.4px;top:28.61px;font-size:28.5px;line-height:28.5px;color:#000;transform:scaleX(0.9930);">Unterschrieben und alle Unterschriften sind gültig.</span>
<div class="b" style="left:786.5px;top:29.5px;width:29.0px;height:29.0px;background:#8b0000;border-radius:50%;"></div>
<span class="t" style="left:795.8px;top:36.21px;font-size:17px;line-height:17px;color:#fff;">2</span>
<div class="b" role="button" style="left:2848.0px;top:11.0px;width:333.0px;height:58.7px;background:#2c2c2c;border-radius:30px;"></div>
<span class="t" style="left:2874.3px;top:27.00px;font-size:30px;line-height:30px;color:#fff;-webkit-text-stroke:0.3px #fff;letter-spacing:0.538px;transform:scaleX(1.0335);">Unterschriftsfenster</span>
</section>
<div class="rg overlay" style="left:0px;top:0px;width:3240px;height:1794px;overflow:visible;pointer-events:none;">
<div class="b" style="left:3.0px;top:248.0px;width:3202.4px;height:86.1px;border:2.4px solid #fb0a10;filter:drop-shadow(3px 3px 1.6px rgba(120,120,120,.85));"></div>
<div class="b" style="left:198.4px;top:573.2px;width:898.2px;height:148.8px;border:2.4px solid #fb0a10;filter:drop-shadow(3px 3px 1.6px rgba(120,120,120,.85));"></div>
<div class="b" style="left:1733.0px;top:1451.0px;width:543.2px;height:286.0px;border:2.4px solid #fb0a10;filter:drop-shadow(3px 3px 1.6px rgba(120,120,120,.85));"></div>
</div>
</div>
</body>
</html>
